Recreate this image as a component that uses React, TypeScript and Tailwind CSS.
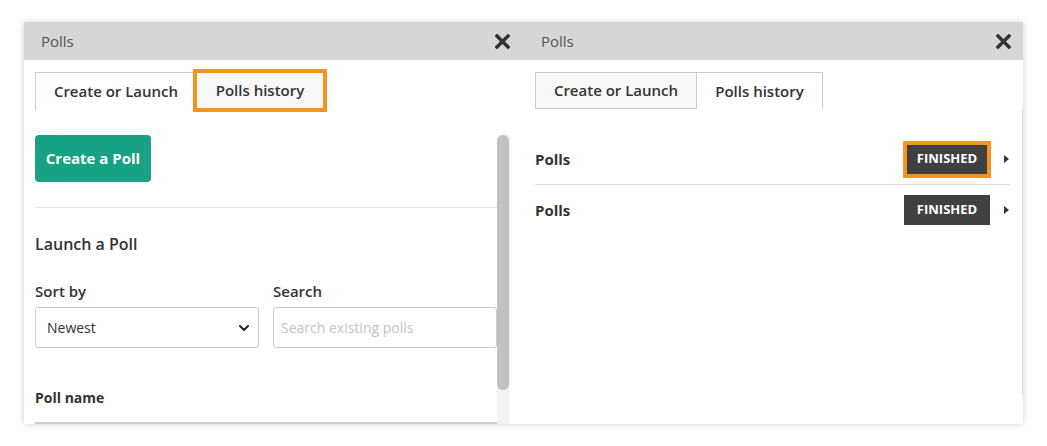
import { ChevronDown } from "lucide-react"

const font = { fontFamily: '"Open Sans", "Liberation Sans", sans-serif' }

function CloseIcon() {
  return (
    <svg width="15" height="15" viewBox="0 0 15 15" className="text-[#333]">
      <path d="M2 2 L13 13 M13 2 L2 13" stroke="currentColor" strokeWidth="3.4" strokeLinecap="square" />
    </svg>
  )
}

function Header({ pad }: { pad: string }) {
  return (
    <div className={`h-[38px] shrink-0 bg-[#d6d6d6] flex items-center justify-between ${pad}`}>
      <span className="text-[15px] text-[#555]">Polls</span>
      <CloseIcon />
    </div>
  )
}

function Badge({ highlight }: { highlight?: boolean }) {
  if (highlight) {
    return (
      <div className="border-4 border-[#f7941d] h-[37px] w-[88px] bg-[#404040] flex items-center justify-center text-[13px] font-bold text-white">
        FINISHED
      </div>
    )
  }
  return (
    <div className="h-[30px] w-[86px] mr-px bg-[#404040] flex items-center justify-center text-[13px] font-bold text-white">
      FINISHED
    </div>
  )
}

function HistoryRow({ highlight }: { highlight?: boolean }) {
  return (
    <div className="h-[50px] flex items-center justify-between">
      <span className="text-[15px] font-bold text-[#333]">Polls</span>
      <div className="flex items-center gap-[13px]">
        <Badge highlight={highlight} />
        <svg width="5" height="8" viewBox="0 0 5 8" className="mr-px">
          <path d="M0 0 L5 4 L0 8 Z" fill="#333" />
        </svg>
      </div>
    </div>
  )
}

export default function App() {
  return (
    <div className="w-[1047px] h-[446px] bg-white pt-[22px] pl-[24px]" style={font}>
      <div className="w-[999px] h-[402px] flex bg-white shadow-[0_0_6px_rgba(0,0,0,0.18)]">
        {/* left window */}
        <div className="w-[486px] h-full flex flex-col overflow-hidden">
          <Header pad="pl-[17px] pr-0" />
          <div className="flex shrink-0 items-center mt-[9px] ml-[11px] h-[43px]">
            <div className="h-[38px] w-[158px] border-t border-l border-[#ccc] bg-white flex items-center justify-center pl-[3px] text-[15px] font-semibold text-[#333]">
              Create or Launch
            </div>
            <div className="h-[43px] w-[134px] border-4 border-[#f7941d] bg-[#f9f9f9] flex items-center justify-center text-[15px] font-semibold text-[#333]">
              Polls history
            </div>
          </div>
          <div className="flex flex-1 mt-[23px] min-h-0">
            <div className="flex-1 pl-[11px]">
              <button className="block h-[47px] w-[116px] rounded bg-[#17a185] text-white text-[15px] font-bold">
                Create a Poll
              </button>
              <div className="mt-[25px] h-px bg-[#e6e6e6]" />
              <div className="mt-[25px] text-[16px] leading-[22px] font-semibold text-[#333]">Launch a Poll</div>
              <div className="mt-[26px] grid grid-cols-2 gap-x-[14px]">
                <div>
                  <div className="text-[15px] leading-[20px] font-semibold text-[#333]">Sort by</div>
                  <div className="mt-[6px] h-[41px] border border-[#ccc] rounded-[3px] flex items-center justify-between pl-[11px] pr-[6px]">
                    <span className="text-[14px] text-[#333]">Newest</span>
                    <ChevronDown size={16} strokeWidth={3} className="text-[#222]" />
                  </div>
                </div>
                <div>
                  <div className="text-[15px] leading-[20px] font-semibold text-[#333]">Search</div>
                  <input
                    className="mt-[6px] h-[41px] w-full border border-[#ccc] rounded-[3px] px-[7px] text-[14px] placeholder:text-[#c4c4c4] outline-none"
                    placeholder="Search existing polls"
                  />
                </div>
              </div>
              <div className="mt-[40px] text-[14px] leading-[20px] font-bold text-[#333]">Poll name</div>
              <div className="mt-[14px] h-[40px] border-t-2 border-[#ccc]" />
            </div>
            <div className="w-[13px] bg-[#f3f3f3] flex flex-col">
              <div className="h-[255px] w-[12px] rounded-full bg-[#c1c1c1]" />
            </div>
          </div>
        </div>
        {/* right window */}
        <div className="flex-1 h-full flex flex-col">
          <Header pad="pl-[31px] pr-[12px]" />
          <div className="flex mt-[12px] ml-[25px]">
            <div className="h-[37px] w-[162px] border border-[#ccc] bg-[#f9f9f9] flex items-center justify-center text-[15px] font-semibold text-[#333]">
              Create or Launch
            </div>
            <div className="h-[37px] w-[126px] border-t border-r border-[#ccc] bg-white flex items-center justify-center text-[15px] font-semibold text-[#333]">
              Polls history
            </div>
          </div>
          <div className="flex flex-1">
            <div className="flex-1 mt-[25px] ml-[25px] mr-[12px]">
              <HistoryRow highlight />
              <div className="h-px bg-[#d9d9d9]" />
              <HistoryRow />
            </div>
            <div className="w-px h-[286px] bg-[#ddd]" />
          </div>
        </div>
      </div>
    </div>
  )
}
